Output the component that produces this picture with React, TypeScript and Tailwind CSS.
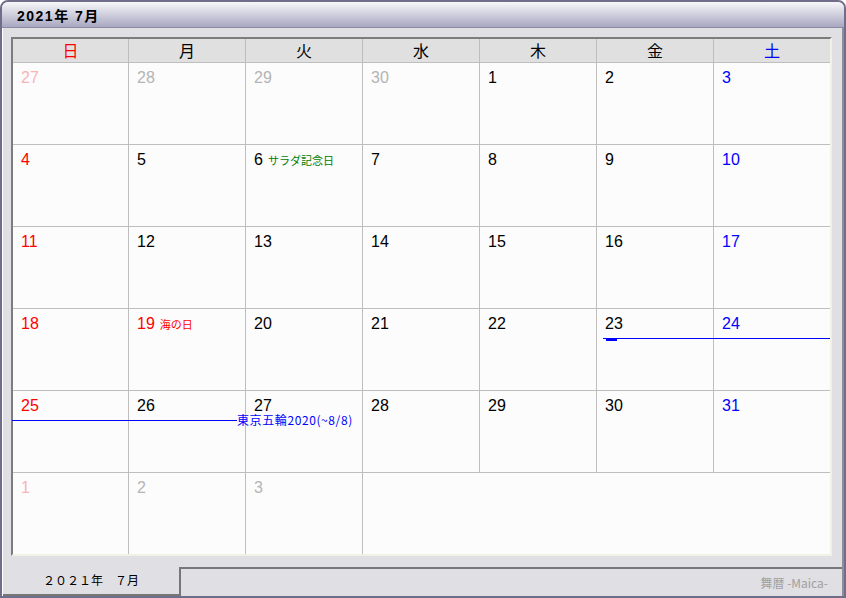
type Tone = "sun" | "sat" | "wk" | "holiday" | "outSun" | "out";

interface DayCell {
  d: number;
  tone: Tone;
  label?: string;
  labelClass?: string;
}

const toneClass: Record<Tone, string> = {
  sun: "text-[#ff0000]",
  holiday: "text-[#ff0000]",
  sat: "text-[#0000ff]",
  wk: "text-black",
  outSun: "text-[#f8b4b4]",
  out: "text-[#b4b4b4]",
};

const headers = [
  { label: "日", cls: "text-[#ff0000]" },
  { label: "月", cls: "text-black" },
  { label: "火", cls: "text-black" },
  { label: "水", cls: "text-black" },
  { label: "木", cls: "text-black" },
  { label: "金", cls: "text-black" },
  { label: "土", cls: "text-[#0000ff]" },
];

function week(start: number, first: Tone = "sun"): DayCell[] {
  return Array.from({ length: 7 }, (_, i) => ({
    d: start + i,
    tone: i === 0 ? first : i === 6 ? "sat" : "wk",
  }));
}

const weeks: DayCell[][] = [
  [
    { d: 27, tone: "outSun" },
    { d: 28, tone: "out" },
    { d: 29, tone: "out" },
    { d: 30, tone: "out" },
    { d: 1, tone: "wk" },
    { d: 2, tone: "wk" },
    { d: 3, tone: "sat" },
  ],
  week(4).map((c) => (c.d === 6 ? { ...c, label: "サラダ記念日", labelClass: "text-[#008000]" } : c)),
  week(11),
  week(18).map((c) => (c.d === 19 ? { ...c, tone: "holiday" as Tone, label: "海の日", labelClass: "text-[#ff0000]" } : c)),
  week(25),
];

const lastWeek: DayCell[] = [
  { d: 1, tone: "outSun" },
  { d: 2, tone: "out" },
  { d: 3, tone: "out" },
];

function Cell({ cell }: { cell: DayCell }) {
  return (
    <div className="flex items-baseline gap-[5px] bg-[#fcfcfc] pl-[8px] pt-[7px]">
      <span className={`font-['Liberation_Sans',sans-serif] text-[16px] leading-[16px] ${toneClass[cell.tone]}`}>{cell.d}</span>
      {cell.label ? <span className={`text-[11px] leading-[12px] ${cell.labelClass}`}>{cell.label}</span> : null}
    </div>
  );
}

export default function App() {
  return (
    <div className="flex h-[598px] w-[846px] flex-col overflow-hidden rounded-t-[8px] border-2 border-[#6f6d89] bg-[#e0dfe3] font-['Noto_Sans_CJK_JP',sans-serif]">
      {/* title bar */}
      <div className="h-[26px] shrink-0 border-b border-[#8c8aa6] bg-gradient-to-b from-[#f7f7fa] to-[#a9a8c1] pl-[15px]">
        <span className="font-['Liberation_Sans','Noto_Sans_CJK_JP',sans-serif] text-[14px] font-bold leading-[25px] tracking-[1.5px] text-black">
          2021年 7月
        </span>
      </div>

      <div className="flex flex-1 flex-col border-l border-r-2 border-l-white border-r-[#8e8d9a]">
        {/* calendar panel */}
        <div className="relative ml-[8px] mt-[9px] w-[821px] border-2 border-b-[#f2f2e4] border-l-[#7c7c7c] border-r-[#f2f2e4] border-t-[#7c7c7c]">
          <div className="grid grid-cols-[115px_repeat(6,116px)] grid-rows-[23px_repeat(6,81px)] gap-px bg-[#bebebe]">
            {headers.map((h) => (
              <div key={h.label} className={`bg-[#e0e0e0] text-center text-[16px] leading-[23px] ${h.cls}`}>
                {h.label}
              </div>
            ))}
            {weeks.flat().map((c, i) => (
              <Cell key={i} cell={c} />
            ))}
            {lastWeek.map((c, i) => (
              <Cell key={`l${i}`} cell={c} />
            ))}
            <div className="col-span-4 bg-[#fcfcfc]" />
          </div>

          {/* event bars */}
          <div className="absolute left-[590px] top-[299px] h-px w-[227px] bg-[#0000ff]" />
          <div className="absolute left-[593px] top-[300px] h-[2px] w-[11px] bg-[#0000ff]" />
          <div className="absolute left-[-1px] top-[381px] h-px w-[225px] bg-[#0000ff]" />
          <div className="absolute left-[224px] top-[375px] whitespace-nowrap text-[12px] leading-[12px] tracking-[0.6px] text-[#0000ff]">
            東京五輪2020(~8/8)
          </div>
        </div>

        {/* bottom tabs */}
        <div className="mt-[11px] flex h-[29px]">
          <div className="flex w-[178px] items-center justify-center border-b-2 border-r-2 border-[#777777] pb-[2px] text-[12px] text-black">
            ２０２１年　７月
          </div>
          <div className="flex flex-1 items-center justify-end border-t-2 border-[#777777] pr-[14px] text-[12px] text-[#a0a0a0]">
            舞暦 -Maica-
          </div>
        </div>
      </div>
    </div>
  );
}
